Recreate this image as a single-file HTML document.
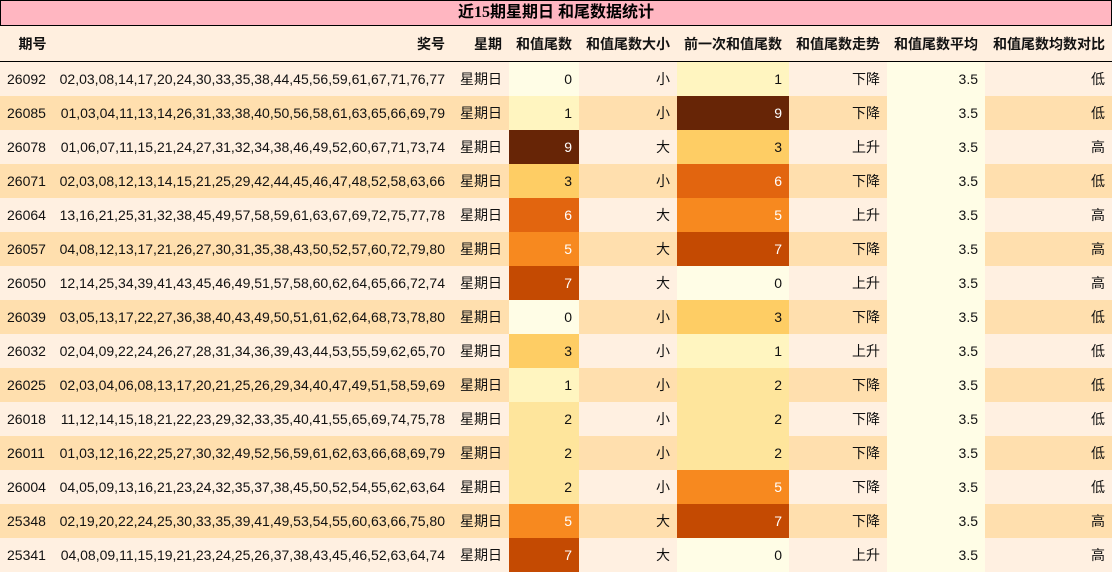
<!DOCTYPE html><html><head><meta charset="utf-8"><style>
body{margin:0;width:1112px;height:573px;overflow:hidden;background:#fff;font-family:"Liberation Sans","Noto Sans CJK SC",sans-serif;font-size:14px;color:#111}
.t{height:24px;background:#ffb6c1;border:1px solid #000;text-align:center;font-weight:bold;font-size:16px;line-height:24px;color:#000;font-family:"Liberation Serif","Noto Sans CJK SC",serif}
table{border-collapse:collapse;width:1112px;table-layout:fixed}
th{height:35px;background:#ffefdf;text-align:right;padding:0 7px 0 0;font-weight:bold;border-bottom:1px solid #000;white-space:nowrap}
td{height:34px;padding:0 7px 0 0;text-align:right;white-space:nowrap}
td:first-child{text-align:left;padding-left:7px}
tr.o td{background:#fff0e1}tr.e td{background:#ffdfae}
td.a{background:#fffde6!important}
.c0{background:#fffde6!important}.c1{background:#fff5c0!important}.c2{background:#fee59c!important}.c3{background:#fecd64!important}
.c5{background:#f7891f!important;color:#fff}.c6{background:#e2650f!important;color:#fff}.c7{background:#c44a02!important;color:#fff}.c9{background:#672506!important;color:#fff}
</style></head><body>
<div class="t">近15期星期日 和尾数据统计</div>
<table>
<colgroup><col style="width:55px"><col style="width:397px"><col style="width:57px"><col style="width:70px"><col style="width:98px"><col style="width:112px"><col style="width:98px"><col style="width:98px"><col style="width:127px"></colgroup>
<tr><th style="text-align:center;padding:0 0 0 10px">期号</th><th>奖号</th><th>星期</th><th>和值尾数</th><th>和值尾数大小</th><th>前一次和值尾数</th><th>和值尾数走势</th><th>和值尾数平均</th><th>和值尾数均数对比</th></tr>
<tr class="o"><td>26092</td><td>02,03,08,14,17,20,24,30,33,35,38,44,45,56,59,61,67,71,76,77</td><td>星期日</td><td class="c0">0</td><td>小</td><td class="c1">1</td><td>下降</td><td class="a">3.5</td><td>低</td></tr>
<tr class="e"><td>26085</td><td>01,03,04,11,13,14,26,31,33,38,40,50,56,58,61,63,65,66,69,79</td><td>星期日</td><td class="c1">1</td><td>小</td><td class="c9">9</td><td>下降</td><td class="a">3.5</td><td>低</td></tr>
<tr class="o"><td>26078</td><td>01,06,07,11,15,21,24,27,31,32,34,38,46,49,52,60,67,71,73,74</td><td>星期日</td><td class="c9">9</td><td>大</td><td class="c3">3</td><td>上升</td><td class="a">3.5</td><td>高</td></tr>
<tr class="e"><td>26071</td><td>02,03,08,12,13,14,15,21,25,29,42,44,45,46,47,48,52,58,63,66</td><td>星期日</td><td class="c3">3</td><td>小</td><td class="c6">6</td><td>下降</td><td class="a">3.5</td><td>低</td></tr>
<tr class="o"><td>26064</td><td>13,16,21,25,31,32,38,45,49,57,58,59,61,63,67,69,72,75,77,78</td><td>星期日</td><td class="c6">6</td><td>大</td><td class="c5">5</td><td>上升</td><td class="a">3.5</td><td>高</td></tr>
<tr class="e"><td>26057</td><td>04,08,12,13,17,21,26,27,30,31,35,38,43,50,52,57,60,72,79,80</td><td>星期日</td><td class="c5">5</td><td>大</td><td class="c7">7</td><td>下降</td><td class="a">3.5</td><td>高</td></tr>
<tr class="o"><td>26050</td><td>12,14,25,34,39,41,43,45,46,49,51,57,58,60,62,64,65,66,72,74</td><td>星期日</td><td class="c7">7</td><td>大</td><td class="c0">0</td><td>上升</td><td class="a">3.5</td><td>高</td></tr>
<tr class="e"><td>26039</td><td>03,05,13,17,22,27,36,38,40,43,49,50,51,61,62,64,68,73,78,80</td><td>星期日</td><td class="c0">0</td><td>小</td><td class="c3">3</td><td>下降</td><td class="a">3.5</td><td>低</td></tr>
<tr class="o"><td>26032</td><td>02,04,09,22,24,26,27,28,31,34,36,39,43,44,53,55,59,62,65,70</td><td>星期日</td><td class="c3">3</td><td>小</td><td class="c1">1</td><td>上升</td><td class="a">3.5</td><td>低</td></tr>
<tr class="e"><td>26025</td><td>02,03,04,06,08,13,17,20,21,25,26,29,34,40,47,49,51,58,59,69</td><td>星期日</td><td class="c1">1</td><td>小</td><td class="c2">2</td><td>下降</td><td class="a">3.5</td><td>低</td></tr>
<tr class="o"><td>26018</td><td>11,12,14,15,18,21,22,23,29,32,33,35,40,41,55,65,69,74,75,78</td><td>星期日</td><td class="c2">2</td><td>小</td><td class="c2">2</td><td>下降</td><td class="a">3.5</td><td>低</td></tr>
<tr class="e"><td>26011</td><td>01,03,12,16,22,25,27,30,32,49,52,56,59,61,62,63,66,68,69,79</td><td>星期日</td><td class="c2">2</td><td>小</td><td class="c2">2</td><td>下降</td><td class="a">3.5</td><td>低</td></tr>
<tr class="o"><td>26004</td><td>04,05,09,13,16,21,23,24,32,35,37,38,45,50,52,54,55,62,63,64</td><td>星期日</td><td class="c2">2</td><td>小</td><td class="c5">5</td><td>下降</td><td class="a">3.5</td><td>低</td></tr>
<tr class="e"><td>25348</td><td>02,19,20,22,24,25,30,33,35,39,41,49,53,54,55,60,63,66,75,80</td><td>星期日</td><td class="c5">5</td><td>大</td><td class="c7">7</td><td>下降</td><td class="a">3.5</td><td>高</td></tr>
<tr class="o"><td>25341</td><td>04,08,09,11,15,19,21,23,24,25,26,37,38,43,45,46,52,63,64,74</td><td>星期日</td><td class="c7">7</td><td>大</td><td class="c0">0</td><td>上升</td><td class="a">3.5</td><td>高</td></tr>
</table></body></html>
